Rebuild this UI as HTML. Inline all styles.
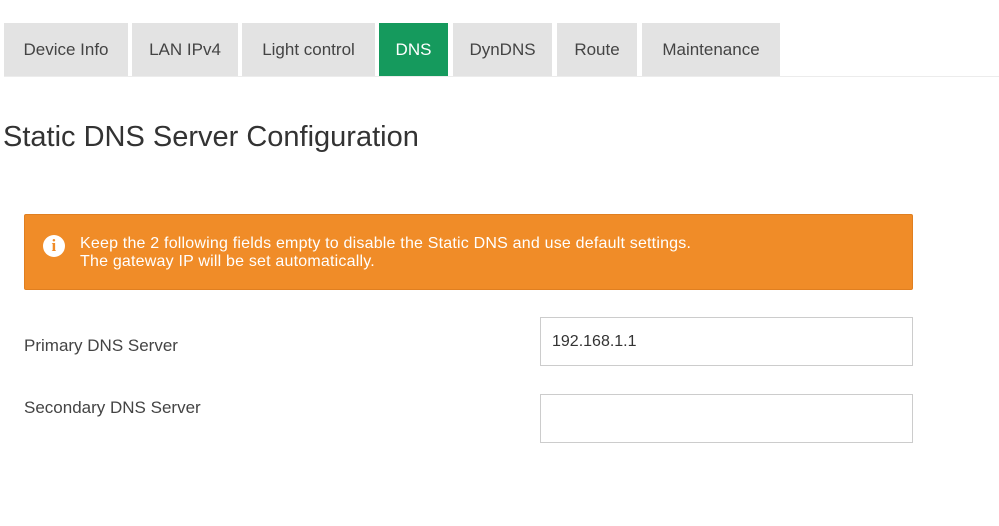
<!DOCTYPE html>
<html><head><style>
body{margin:0;width:999px;height:526px;background:#fff;font-family:"Liberation Sans",sans-serif;color:#333;position:relative;overflow:hidden}
.tab{position:absolute;top:23px;height:53px;background:#e3e3e3;color:#444;font-size:17px;line-height:53px;text-align:center}
.tab.on{background:#159a5d;color:#fff}
.line{position:absolute;top:76px;left:4px;right:0;height:1px;background:#ececec}
h1{position:absolute;left:3px;top:121px;margin:0;font-weight:normal;font-size:29px;color:#333}
.alert{position:absolute;left:24px;top:214px;width:887px;height:74px;background:#f08c28;border:1px solid #e07f20;border-radius:2px;color:#fff;font-size:16px;line-height:18px;letter-spacing:0.2px}
.alert .t{position:absolute;left:55px;top:20px}
.ic{position:absolute;left:18px;top:20px;width:22px;height:22px;border-radius:50%;background:#fff;color:#f08c28;font-weight:bold;font-family:"Liberation Serif",serif;font-size:17px;text-align:center;line-height:22px}
.lbl{position:absolute;left:24px;font-size:17px;color:#444}
.in{position:absolute;left:540px;width:371px;height:47px;border:1px solid #ccc;box-sizing:content-box;font-size:16px;line-height:47px}
.in span{margin-left:11px;color:#333}
</style></head><body>
<div class="tab" style="left:4px;width:124px">Device Info</div>
<div class="tab" style="left:132px;width:106px">LAN IPv4</div>
<div class="tab" style="left:242px;width:133px">Light control</div>
<div class="tab on" style="left:379px;width:69px">DNS</div>
<div class="tab" style="left:453px;width:99px">DynDNS</div>
<div class="tab" style="left:557px;width:80px">Route</div>
<div class="tab" style="left:642px;width:138px">Maintenance</div>
<div class="line"></div>
<h1>Static DNS Server Configuration</h1>
<div class="alert"><div class="ic">i</div><div class="t">Keep the 2 following fields empty to disable the Static DNS and use default settings.<br>The gateway IP will be set automatically.</div></div>
<div class="lbl" style="top:336px">Primary DNS Server</div>
<div class="in" style="top:317px"><span>192.168.1.1</span></div>
<div class="lbl" style="top:398px">Secondary DNS Server</div>
<div class="in" style="top:394px"></div>
</body></html>
